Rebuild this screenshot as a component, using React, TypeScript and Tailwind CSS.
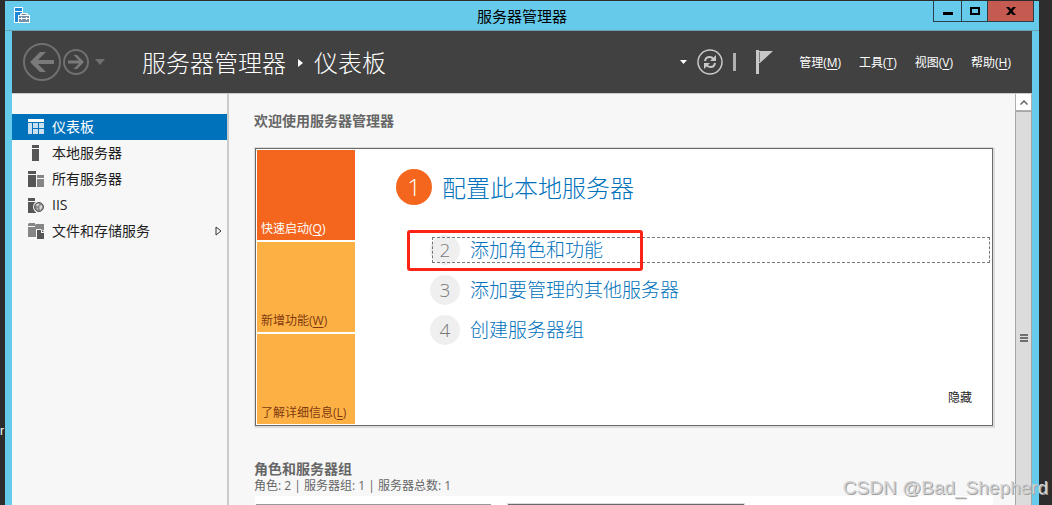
import type { ReactNode } from "react";

const MENUS = [
  { label: "管理", hotkey: "M" },
  { label: "工具", hotkey: "T" },
  { label: "视图", hotkey: "V" },
  { label: "帮助", hotkey: "H" },
];

const TILES = [
  { label: "快速启动", hotkey: "Q", active: true },
  { label: "新增功能", hotkey: "W", active: false },
  { label: "了解详细信息", hotkey: "L", active: false },
];

const TASKS = [
  { step: 2, label: "添加角色和功能", focused: true },
  { step: 3, label: "添加要管理的其他服务器", focused: false },
  { step: 4, label: "创建服务器组", focused: false },
];

const AppIcon = () => (
  <svg width="16" height="16" viewBox="0 0 16 16">
    <path d="M0.5 0.5h8v15h-8z" fill="#1e88d8" stroke="#fff" />
    <path d="M1 4.5h7" stroke="#fff" />
    <path d="M4 8h12v8H4z" fill="#fff" />
    <path d="M6 8V7l1-1h6l1 1v1z" fill="#fff" />
    <path d="M7.500 7h5v1h-5z" fill="#7590a5" />
    <path d="M5 9h10v2H5zM5 12h10v3H5z" fill="#7590a5" />
    <path d="M7 10h1v3H7zM12 10h1v3h-1z" fill="#fff" />
  </svg>
);

const DashboardIcon = () => (
  <svg width="16" height="16" viewBox="0 0 16 16">
    <path d="M0 0h16v3H0z" fill="#fff" />
    <path
      d="M0 4h4v11H0zM5 4h5v5H5zM11 4h5v5h-5zM5 10h5v5H5zM11 10h5v5h-5z"
      fill="#c9e0f1"
    />
  </svg>
);

const ServerIcon = () => (
  <svg width="16" height="16" viewBox="0 0 16 16">
    <path d="M4 0h7v3H4zM4 4h7v12H4z" fill="#565656" />
  </svg>
);

const ServersIcon = () => (
  <svg width="16" height="16" viewBox="0 0 16 16">
    <path d="M0 0h8v3H0zM0 4h8v12H0z" fill="#565656" />
    <path d="M9 4h7v3H9zM9 8h7v8H9z" fill="#868686" />
  </svg>
);

const IisIcon = () => (
  <svg width="16" height="16" viewBox="0 0 16 16">
    <path d="M0 1h7v3H0zM0 5h8v11H0z" fill="#565656" />
    <circle cx="11" cy="10" r="6" fill="#f7f7f7" />
    <circle cx="11" cy="10" r="4.5" fill="#8a8a8a" stroke="#565656" />
    <path
      d="M8 8l2-1.500 1.500.5-1 1.500-1.500 1zM11.500 9l2-1 1 2-1.500 2.500-1 .5-.5-2zM8.500 11l1.500.5v1.500z"
      fill="#d6d6d6"
    />
  </svg>
);

const StorageIcon = () => (
  <svg width="16" height="16" viewBox="0 0 16 16">
    <path d="M0 1l1-1h6v3H0zM0 4h8v10H0z" fill="#868686" />
    <path d="M7 2l1-1h8v6H7z" fill="#868686" />
    <path d="M8 6h5l3 3v7H8z" fill="#f7f7f7" />
    <path d="M9 7h4v3h3v6H9z" fill="#565656" />
    <path d="M14 7l2 2h-2z" fill="#565656" />
  </svg>
);

const NAV_ITEMS = [
  { label: "仪表板", icon: <DashboardIcon />, selected: true },
  { label: "本地服务器", icon: <ServerIcon /> },
  { label: "所有服务器", icon: <ServersIcon /> },
  { label: "IIS", icon: <IisIcon /> },
  { label: "文件和存储服务", icon: <StorageIcon />, expandable: true },
];

const Hotkey = ({ label, hotkey }: { label: string; hotkey: string }) => (
  <>
    {label}(<span className="underline underline-offset-2">{hotkey}</span>)
  </>
);

const CaptionButton = ({
  name,
  className,
  children,
}: {
  name: string;
  className: string;
  children: ReactNode;
}) => (
  <button
    aria-label={name}
    className={`flex h-[21px] items-center justify-center border-b border-l border-[#2b3f48] ${className}`}
  >
    {children}
  </button>
);

const TitleBar = () => (
  <header className="grid h-[30px] grid-cols-[1fr_auto_1fr] border-b border-[#6d9fb3]">
    <div className="pt-[6px] pl-[9px]">
      <AppIcon />
    </div>
    <div className="self-center text-[15px] leading-5 text-black">
      服务器管理器
    </div>
    <div className="flex items-start justify-end pr-[5px]">
      <CaptionButton name="最小化" className="w-7">
        <svg width="10" height="10" viewBox="0 0 10 10">
          <path d="M0 6h10v3H0z" />
        </svg>
      </CaptionButton>
      <CaptionButton name="最大化" className="w-[26px]">
        <svg width="10" height="8" viewBox="0 0 10 8">
          <path d="M1 1h8v6H1z" fill="none" stroke="#000" strokeWidth="2" />
        </svg>
      </CaptionButton>
      <CaptionButton name="关闭" className="w-[47px] border-r bg-[#c45a50]">
        <svg width="10" height="8" viewBox="0 0 10 8">
          <path d="M0 0h3l2 2 2-2h3L6.500 4 10 8H7L5 6 3 8H0l3.500-4z" />
        </svg>
      </CaptionButton>
    </div>
  </header>
);

const Toolbar = () => (
  <div className="flex h-[62px] items-center bg-[#414141] pr-[21px] pl-[11px] text-white">
    <button aria-label="后退">
      <svg width="38" height="38" viewBox="0 0 38 38">
        <circle cx="19" cy="19" r="18" fill="none" stroke="#707070" strokeWidth="2" />
        <path d="M7 19l10-10h6l-8 8h16v4H15l8 8h-6z" fill="#7a7a7a" />
      </svg>
    </button>
    <button aria-label="前进" className="ml-[2px]">
      <svg width="26" height="26" viewBox="0 0 26 26">
        <circle cx="13" cy="13" r="12" fill="none" stroke="#707070" strokeWidth="2" />
        <path d="M21 13l-7 7h-3.500l5.500-5.500H5v-3h11L10.500 6H14z" fill="#7a7a7a" />
      </svg>
    </button>
    <button aria-label="历史记录" className="ml-[6px]">
      <svg width="10" height="6" viewBox="0 0 10 6">
        <path d="M0 0h10L5 6z" fill="#707070" />
      </svg>
    </button>
    <h1 className="ml-[37px] flex items-center pt-[2px] text-2xl font-light">
      服务器管理器
      <svg className="mr-[11px] ml-3" width="5" height="8" viewBox="0 0 5 8">
        <path d="M0 0l5 4-5 4z" fill="#fff" />
      </svg>
      仪表板
    </h1>

    <div className="ml-auto flex items-center">
      <button aria-label="刷新选项">
        <svg width="7" height="4" viewBox="0 0 7 4">
          <path d="M0 0h7L3.500 4z" fill="#fff" />
        </svg>
      </button>
      <button aria-label="刷新" className="ml-[10px]">
        <svg width="26" height="26" viewBox="0 0 26 26">
          <circle cx="13" cy="13" r="12" fill="none" stroke="#c8c8c8" strokeWidth="1.500" />
          <path
            d="M8 12c.5-3 2-4 4.500-4 2 0 3 .5 4 2M18 14c-.5 3-2 4-4.500 4-2 0-3-.5-4-2"
            fill="none"
            stroke="#c8c8c8"
            strokeWidth="2"
          />
          <path d="M19 6v6h-6zM7 20v-6h6z" fill="#c8c8c8" />
        </svg>
      </button>
      <div className="ml-[10px] h-[18px] w-[3px] bg-[#b0b0b0]" />
      <button aria-label="通知" className="ml-5">
        <svg width="17" height="28" viewBox="0 0 17 28">
          <path d="M0 2h3v24H0z" fill="#c8c8c8" />
          <path d="M3 3h14L4 15H3z" fill="#c8c8c8" />
          <path d="M3.500 4v10" stroke="#7a7a7a" />
        </svg>
      </button>
      <div className="ml-[26px] flex gap-[18px] pt-[2px] text-xs">
        {MENUS.map((menu) => (
          <button key={menu.hotkey}>
            <Hotkey {...menu} />
          </button>
        ))}
      </div>
    </div>
  </div>
);

const Sidebar = () => (
  <nav className="w-[217px] shrink-0 border-r-2 border-[#cbcbcb] pt-5">
    {NAV_ITEMS.map((item) => (
      <a
        key={item.label}
        href="#"
        className={`flex h-[26px] items-center gap-2 pr-[5px] pl-4 text-sm ${
          item.selected ? "bg-[#0072bc] text-white" : "text-[#1e1e1e]"
        }`}
      >
        {item.icon}
        {item.label}
        {item.expandable && (
          <svg className="ml-auto" width="7" height="10" viewBox="0 0 7 10">
            <path d="M1 1l5 4-5 4z" fill="none" stroke="#333" />
          </svg>
        )}
      </a>
    ))}
  </nav>
);

const WelcomeCard = () => (
  <section className="mt-[17px] mr-[2px] ml-px flex border border-[#6a6a6a] bg-white p-px shadow-[0_0_0_1px_#dcdcdc,1px_1px_0_1px_#dcdcdc]">
    <div className="flex w-[98px] shrink-0 flex-col gap-[2px]">
      {TILES.map((tile) => (
        <button
          key={tile.hotkey}
          className={`flex h-[90px] items-end px-1 pb-[3px] text-left text-xs whitespace-nowrap ${
            tile.active ? "bg-[#f4661e] text-white" : "bg-[#fdb145] text-[#7f3a10]"
          }`}
        >
          <span>
            <Hotkey label={tile.label} hotkey={tile.hotkey} />
          </span>
        </button>
      ))}
    </div>

    <div className="flex flex-1 flex-col pt-[19px] pl-[41px] font-light text-[#0072bc]">
      <a href="#" className="flex items-center gap-[10px] text-2xl">
        <span className="flex size-9 items-center justify-center rounded-full bg-[#f4661e] text-white">
          1
        </span>
        <span className="pt-[2px]">配置此本地服务器</span>
      </a>
      <ul className="mt-[30px] flex flex-col gap-[10px] pl-[34px] text-[19px] leading-[30px]">
        {TASKS.map((task) => (
          <li key={task.step} className="relative">
            <a href="#" className="flex h-[30px] items-center gap-[10px]">
              <span className="flex size-[30px] items-center justify-center rounded-full bg-[#efefef] text-[#777]">
                {task.step}
              </span>
              <span>{task.label}</span>
            </a>
            {task.focused && (
              <>
                <div className="pointer-events-none absolute inset-y-[2px] right-px left-[2px] border border-dashed border-[#777]" />
                <div className="pointer-events-none absolute -top-[5px] -left-[23px] h-[41px] w-[236px] rounded-[3px] border-3 border-[#fb2316]" />
              </>
            )}
          </li>
        ))}
      </ul>
      <button className="mt-auto mr-[19px] mb-[18px] self-end text-xs font-normal text-[#1e1e1e]">
        隐藏
      </button>
    </div>
  </section>
);

const RoleGroups = () => (
  <section className="mt-[34px] text-[#666]">
    <h2 className="text-sm leading-[18px] font-bold">角色和服务器组</h2>
    <p className="text-xs leading-4">角色: 2 | 服务器组: 1 | 服务器总数: 1</p>
    <div className="mt-[2px] mr-[2px] ml-px flex gap-[17px] bg-white px-px pt-2">
      <div className="h-20 w-[235px] border border-[#999]" />
      <div className="h-20 w-[236px] border border-[#6a6a6a] shadow-[0_0_0_1px_#dcdcdc]" />
    </div>
  </section>
);

const ScrollBar = () => (
  <div className="flex w-[17px] shrink-0 flex-col bg-[#dcdcdc]">
    <button
      aria-label="向上滚动"
      className="flex h-[17px] shrink-0 items-center justify-center border border-t-0 border-[#b0b0b0] bg-white"
    >
      <svg width="8" height="5" viewBox="0 0 8 5">
        <path d="M0.500 4.500L4 1l3.500 3.500" fill="none" stroke="#666" strokeWidth="1.500" />
      </svg>
    </button>
    <div className="flex flex-1 flex-col items-center justify-center gap-px border border-b-0 border-[#a6a6a6] pt-[58px]">
      <div className="h-[2px] w-2 bg-[#707070]" />
      <div className="h-[2px] w-2 bg-[#707070]" />
      <div className="h-[2px] w-2 bg-[#707070]" />
    </div>
  </div>
);

export default function App() {
  return (
    <div className="relative flex h-screen overflow-hidden bg-[#2d2d2d] pt-px pr-[13px] font-['Open_Sans','Noto_Sans_CJK_SC',sans-serif]">
      {/* Sliver of the terminal behind the window */}
      <div className="w-[5px] shrink-0 overflow-hidden pt-[422px] font-['Liberation_Sans',sans-serif] text-xs leading-4 text-white">
        r
      </div>

      <div className="flex min-w-0 flex-1 flex-col bg-[#66caea]">
        <TitleBar />
        <div className="mx-[7px] flex min-h-0 flex-1 flex-col bg-[#f7f7f7]">
          <Toolbar />
          <div className="flex min-h-0 flex-1 border-t border-[#cbcbcb]">
            <Sidebar />
            <main className="min-w-0 flex-1 overflow-hidden pt-[17px] pr-5 pl-[25px]">
              <h2 className="text-sm font-bold text-[#666]">欢迎使用服务器管理器</h2>
              <WelcomeCard />
              <RoleGroups />
            </main>
            <ScrollBar />
          </div>
        </div>
      </div>

      {/* Watermark */}
      <div className="pointer-events-none absolute right-1 bottom-[5px] font-['Liberation_Sans',sans-serif] text-[19px] leading-6 text-[#d2d2d2] [text-shadow:1px_1px_0_#a0a0a0]">
        CSDN @Bad_Shepherd
      </div>
    </div>
  );
}
